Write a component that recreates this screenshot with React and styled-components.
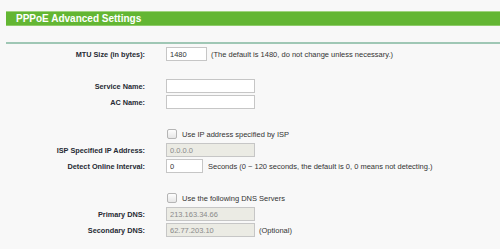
import React from 'react'
import styled, { createGlobalStyle } from 'styled-components'

const GlobalStyle = createGlobalStyle`
    html, body {
        margin: 0;
        padding: 0;
        background: #f8f8f8;
        font-family: "Liberation Sans", Arial, sans-serif;
    }
`

function App() {
    return (
        <Page>
            <GlobalStyle />
            <Header>
                <Title>PPPoE Advanced Settings</Title>
            </Header>
            <Divider />
            <Form>
                <Row>
                    <Label>MTU Size (in bytes):</Label>
                    <Field>
                        <TextInput width={41} defaultValue="1480" />
                        <Note>(The default is 1480, do not change unless necessary.)</Note>
                    </Field>
                </Row>
                <Spacer />
                <Row>
                    <Label>Service Name:</Label>
                    <Field>
                        <TextInput width={89} />
                    </Field>
                </Row>
                <Row>
                    <Label>AC Name:</Label>
                    <Field>
                        <TextInput width={89} />
                    </Field>
                </Row>
                <Spacer />
                <Row>
                    <Label />
                    <Field>
                        <Check type="checkbox" />
                        <CheckText>Use IP address specified by ISP</CheckText>
                    </Field>
                </Row>
                <Row>
                    <Label>ISP Specified IP Address:</Label>
                    <Field>
                        <TextInput width={89} defaultValue="0.0.0.0" disabled />
                    </Field>
                </Row>
                <Row>
                    <Label>Detect Online Interval:</Label>
                    <Field>
                        <TextInput width={37} defaultValue="0" />
                        <Note gap={5}>Seconds (0 ~ 120 seconds, the default is 0, 0 means not detecting.)</Note>
                    </Field>
                </Row>
                <Spacer />
                <Row>
                    <Label />
                    <Field>
                        <Check type="checkbox" />
                        <CheckText>Use the following DNS Servers</CheckText>
                    </Field>
                </Row>
                <Row>
                    <Label>Primary DNS:</Label>
                    <Field>
                        <TextInput width={89} defaultValue="213.163.34.66" disabled />
                    </Field>
                </Row>
                <Row>
                    <Label>Secondary DNS:</Label>
                    <Field>
                        <TextInput width={89} defaultValue="62.77.203.10" disabled />
                        <Note>(Optional)</Note>
                    </Field>
                </Row>
            </Form>
        </Page>
    )
}

const Page = styled.div`
    padding: 11px 0 0 6px;
    width: 494px;
    height: 238px;
    overflow: hidden;
`

const Header = styled.div`
    height: 13px;
    background: #63b633;
    border-top: 1px solid #9fd37e;
    border-bottom: 1px solid #8fcb6a;
    display: flex;
    align-items: center;
`

const Title = styled.h1`
    margin: 0 0 0 10px;
    font-size: 10px;
    font-weight: bold;
    color: #fff;
    line-height: 13px;
`

const Divider = styled.div`
    margin-top: 16px;
    height: 2px;
    background: #9fc7b5;
`

const Form = styled.div`
    margin-top: 2px;
    display: flex;
    flex-direction: column;
`

const Row = styled.div`
    display: grid;
    grid-template-columns: 139px 1fr;
    column-gap: 21px;
    height: 16px;
    align-items: center;
`

const Spacer = styled.div`
    height: 16px;
`

const Label = styled.div`
    text-align: right;
    font-size: 7.3px;
    font-weight: bold;
    color: #262a33;
    white-space: nowrap;
`

const Field = styled.div`
    display: flex;
    align-items: center;
    height: 16px;
`

const TextInput = styled.input.attrs({ type: 'text' })`
    box-sizing: border-box;
    width: ${props => props.width}px;
    height: 14px;
    margin: 0;
    padding: 0 3px;
    border: 1px solid #c6c6c6;
    border-radius: 0;
    background: #fff;
    font-family: "Liberation Sans", Arial, sans-serif;
    font-size: 7.5px;
    color: #333;
    outline: none;

    &:disabled {
        background: #ebebe4;
        color: #8a8a8a;
    }
`

const Note = styled.span`
    margin-left: ${props => props.gap || 4}px;
    font-size: 7.5px;
    color: #333;
    white-space: nowrap;
`

const Check = styled.input`
    appearance: none;
    box-sizing: border-box;
    width: 10px;
    height: 10px;
    margin: 0 0 0 1px;
    border: 1px solid #b5b5b5;
    border-radius: 2px;
    background: linear-gradient(#fdfdfd, #e6e6e6);
`

const CheckText = styled.span`
    margin-left: 5px;
    font-size: 7.5px;
    color: #333;
    white-space: nowrap;
`

export default App
